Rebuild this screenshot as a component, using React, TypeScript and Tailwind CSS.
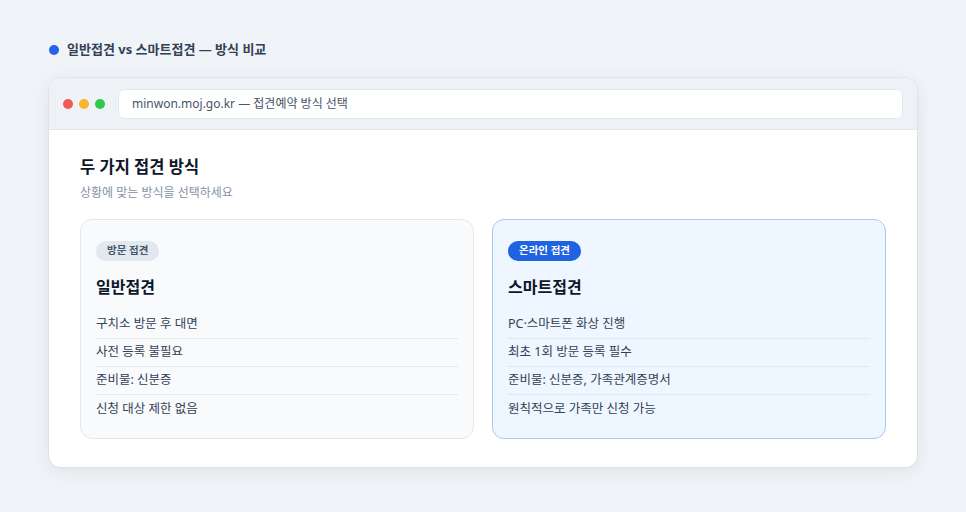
const font = { fontFamily: '"Noto Sans", "Noto Sans CJK KR", sans-serif' };

type Option = {
  badge: string;
  title: string;
  items: string[];
  featured?: boolean;
};

const options: Option[] = [
  {
    badge: "방문 접견",
    title: "일반접견",
    items: ["구치소 방문 후 대면", "사전 등록 불필요", "준비물: 신분증", "신청 대상 제한 없음"],
  },
  {
    badge: "온라인 접견",
    title: "스마트접견",
    items: [
      "PC·스마트폰 화상 진행",
      "최초 1회 방문 등록 필수",
      "준비물: 신분증, 가족관계증명서",
      "원칙적으로 가족만 신청 가능",
    ],
    featured: true,
  },
];

function OptionCard({ option }: { option: Option }) {
  const { featured } = option;
  return (
    <div
      className={
        featured
          ? "rounded-xl border border-[#a9c9ee] bg-[#eef6ff] px-[15px] pt-[21px] pb-[15px]"
          : "rounded-xl border border-[#e3e8ef] bg-[#f8fafc] px-[15px] pt-[21px] pb-[15px]"
      }
    >
      <div className="flex">
        <span
          className={
            featured
              ? "flex h-5 items-center rounded-full bg-[#1f63e0] px-[11px] text-[10.5px] font-bold text-white"
              : "flex h-5 items-center rounded-full bg-[#e2e8f0] px-[11px] text-[10.5px] font-bold text-[#475569]"
          }
        >
          {option.badge}
        </span>
      </div>
      <h3 className="mt-[14px] text-[16px] leading-6 font-bold text-[#0f172a]">{option.title}</h3>
      <ul className="mt-[12px]">
        {option.items.map((item, i) => (
          <li
            key={item}
            className={
              i < option.items.length - 1
                ? "flex h-7 items-center border-b border-[#e2e8f0] text-[12.5px] text-[#334155]"
                : "flex h-7 items-center text-[12.5px] text-[#334155]"
            }
          >
            {item}
          </li>
        ))}
      </ul>
    </div>
  );
}

export default function App() {
  return (
    <div className="min-h-screen bg-[#f0f3f7] px-[49px] pt-[40px] pb-[45px]" style={font}>
      <div className="flex h-[19px] items-center gap-[8px]">
        <span className="h-[10px] w-[10px] rounded-full bg-[#2563eb]" />
        <span className="text-[13px] font-bold text-[#334155]">일반접견 vs 스마트접견 — 방식 비교</span>
      </div>

      <div className="mt-[19px] overflow-hidden rounded-xl bg-white shadow-[0_4px_18px_rgba(15,23,42,0.08),0_0_0_1px_rgba(15,23,42,0.04)]">
        <div className="flex h-[52px] items-center gap-[13px] border-b border-[#e2e8f0] bg-[#eef1f5] px-[14px]">
          <div className="flex gap-[6px]">
            <span className="h-[10px] w-[10px] rounded-full bg-[#f25a57]" />
            <span className="h-[10px] w-[10px] rounded-full bg-[#f7b52c]" />
            <span className="h-[10px] w-[10px] rounded-full bg-[#2fc94f]" />
          </div>
          <div className="flex h-[30px] flex-1 items-center rounded-md border border-[#e2e8f0] bg-white px-[13px] text-[12px] text-[#475569]">
            minwon.moj.go.kr — 접견예약 방식 선택
          </div>
        </div>

        <div className="px-[31px] pt-[25px] pb-[28px]">
          <h2 className="text-[16.5px] leading-6 font-bold text-[#0f172a]">두 가지 접견 방식</h2>
          <p className="mt-[5px] text-[12px] text-[#8391a7]">상황에 맞는 방식을 선택하세요</p>
          <div className="mt-[17px] grid grid-cols-2 gap-[18px]">
            {options.map((o) => (
              <OptionCard key={o.title} option={o} />
            ))}
          </div>
        </div>
      </div>
    </div>
  );
}
